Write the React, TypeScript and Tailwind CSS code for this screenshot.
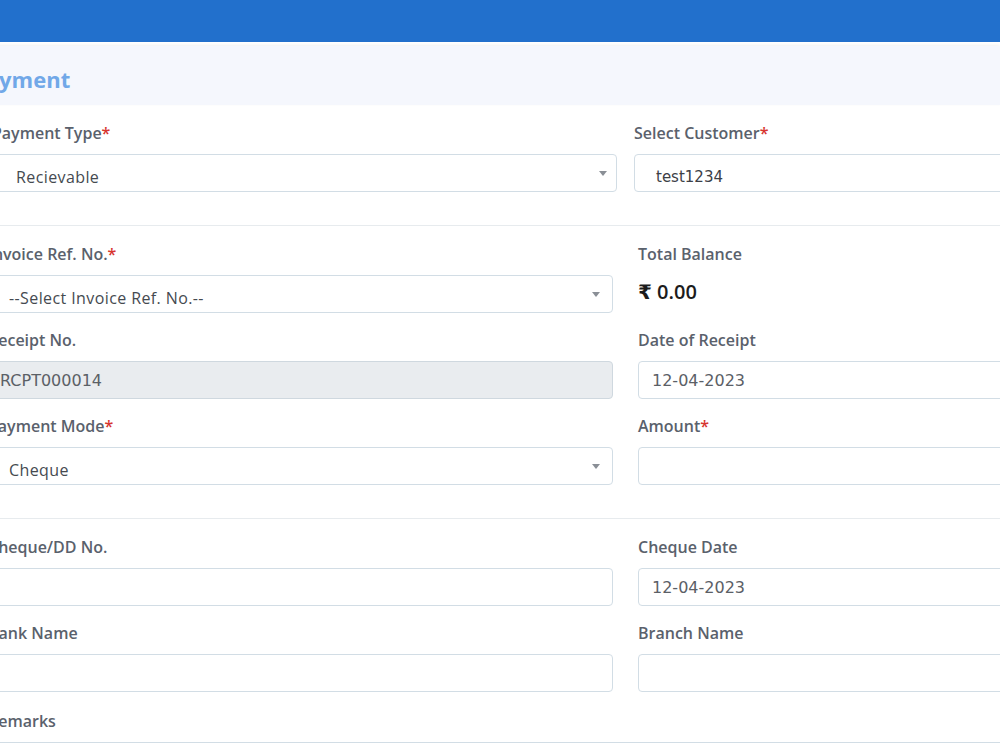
import type { ReactNode } from 'react';

function Caret() {
  return (
    <svg width="8" height="5" viewBox="0 0 8 5" className="shrink-0">
      <path d="M0 0h8L4 5z" fill="#8a8f96" />
    </svg>
  );
}

function Field({ label, required, children }: { label: string; required?: boolean; children: ReactNode }) {
  return (
    <div className="mb-[15px]">
      <label className="block h-[24px] leading-[24px] mb-[9px] text-[16px] font-semibold text-[#5a616c]">
        {label}
        {required && <span className="text-[#d7352f]">*</span>}
      </label>
      {children}
    </div>
  );
}

function Select({ value, pad = 'pl-[20px]', caret = 'pr-[12px]' }: { value: string; pad?: string; caret?: string }) {
  return (
    <div className={`h-[38px] border border-[#d2dde5] rounded-[4px] bg-white flex items-center justify-between ${pad} ${caret}`}>
      <span className="pt-[7px] text-[16px] tracking-[0.4px] text-[#454a50]">{value}</span>
      <Caret />
    </div>
  );
}

function Input({ value, disabled, pad = 'pl-[13px]' }: { value?: string; disabled?: boolean; pad?: string }) {
  return (
    <div
      className={`h-[38px] border rounded-[4px] flex items-center ${pad} ${
        disabled ? 'bg-[#e9ecef] border-[#cfd8df]' : 'bg-white border-[#d2dde5]'
      }`}
    >
      <span className="pt-[2px] font-['DejaVu_Sans',sans-serif] text-[16px] text-[#5b6066]">{value}</span>
    </div>
  );
}

export default function App() {
  return (
    <div className="w-[1000px] h-[750px] overflow-hidden bg-white font-['Open_Sans','DejaVu_Sans',sans-serif]">
      <div className="h-[42px] bg-[#2270cc]" />
      <div className="mt-[4px] -ml-[28px] h-[59px] bg-[#f5f7fd] shadow-[0_-1px_3px_rgba(0,0,0,0.06)] flex items-center pt-[7px]">
        <h1 className="text-[22px] font-bold text-[#71a8e8]">Payment</h1>
      </div>

      <div className="-ml-[12px] w-[1275px]">
        <section className="pt-[16px] pb-[18px] border-b border-[#e7ebee]">
          <div className="grid grid-cols-[625px_625px] gap-x-[17px] pl-[4px]">
            <Field label="Payment Type" required>
              <Select value="Recievable" pad="pl-[23px]" caret="pr-[9px]" />
            </Field>
            <Field label="Select Customer" required>
              <div className="h-[38px] border border-[#d2dde5] rounded-[4px] bg-white flex items-center pl-[21px]">
                <span className="pt-[8px] font-['DejaVu_Sans',sans-serif] text-[15px] text-[#3c4046]">test1234</span>
              </div>
            </Field>
          </div>
        </section>

        <section className="pt-[16px] pb-[18px] border-b border-[#e7ebee]">
          <div className="grid grid-cols-[625px_625px] gap-x-[25px]">
            <Field label="Invoice Ref. No." required>
              <Select value="--Select Invoice Ref. No.--" />
            </Field>
            <div className="mb-[15px]">
              <div className="h-[24px] leading-[24px] text-[16px] font-semibold text-[#5a616c]">Total Balance</div>
              <div className="mt-[12px] leading-[28px] text-[20px] font-semibold text-[#1c1c1c]">₹ 0.00</div>
            </div>
            <Field label="Receipt No.">
              <Input value="RCPT000014" disabled pad="pl-[11px]" />
            </Field>
            <Field label="Date of Receipt">
              <Input value="12-04-2023" />
            </Field>
            <Field label="Payment Mode" required>
              <Select value="Cheque" />
            </Field>
            <Field label="Amount" required>
              <Input />
            </Field>
          </div>
        </section>

        <section className="pt-[16px]">
          <div className="grid grid-cols-[625px_625px] gap-x-[25px]">
            <Field label="Cheque/DD No.">
              <Input />
            </Field>
            <Field label="Cheque Date">
              <Input value="12-04-2023" />
            </Field>
            <Field label="Bank Name">
              <Input />
            </Field>
            <Field label="Branch Name">
              <Input />
            </Field>
            <div className="col-span-2 mt-[2px]">
              <label className="block h-[24px] leading-[24px] mb-[9px] text-[16px] font-semibold text-[#5a616c]">
                Remarks
              </label>
              <div className="h-[70px] border border-[#d2dde5] rounded-[4px] bg-white" />
            </div>
          </div>
        </section>
      </div>
    </div>
  );
}
